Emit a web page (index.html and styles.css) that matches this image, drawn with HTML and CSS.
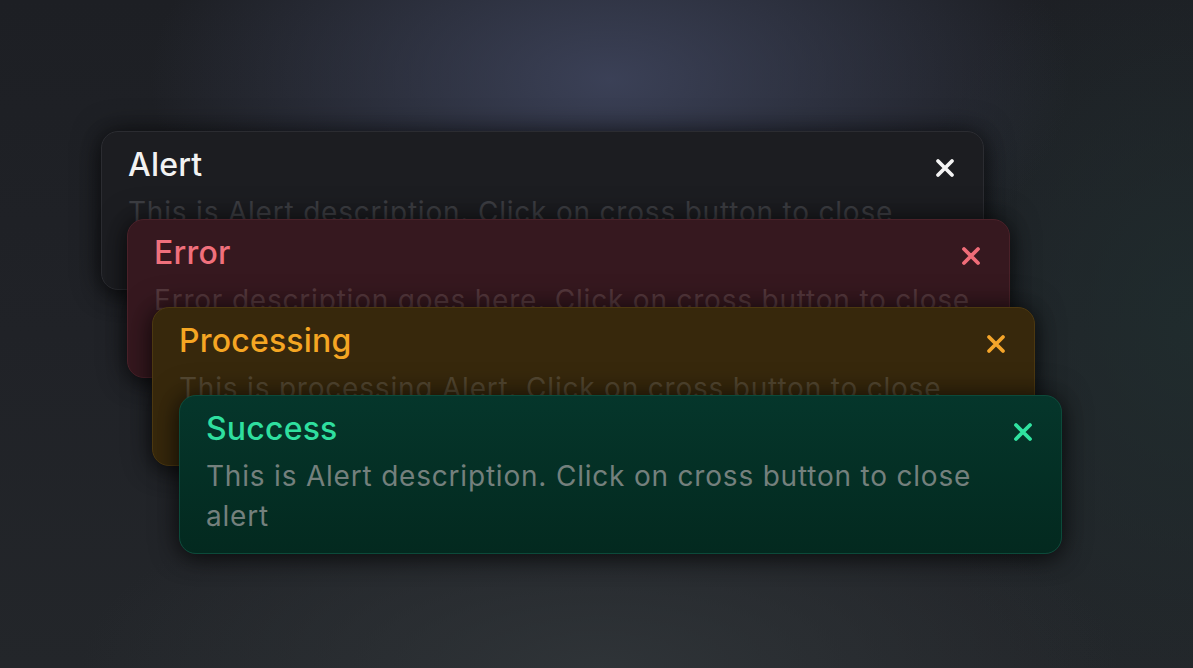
FILE: index.html
```html
<!DOCTYPE html>
<html lang="en">
<head>
<meta charset="utf-8">
<title>Alerts</title>
<link rel="stylesheet" href="styles.css">
</head>
<body>
<main class="stage">
  <div class="stack">
    <section class="alert alert-default">
      <div class="alert-head">
        <h2 class="alert-title">Alert</h2>
        <button class="alert-close" aria-label="Close">
          <svg viewBox="0 0 20 20" width="20" height="20"><path d="M3 3L17 17M17 3L3 17" /></svg>
        </button>
      </div>
      <p class="alert-desc">This is Alert description. Click on cross button to close alert</p>
    </section>
    <section class="alert alert-error">
      <div class="alert-head">
        <h2 class="alert-title">Error</h2>
        <button class="alert-close" aria-label="Close">
          <svg viewBox="0 0 20 20" width="20" height="20"><path d="M3 3L17 17M17 3L3 17" /></svg>
        </button>
      </div>
      <p class="alert-desc">Error description goes here. Click on cross button to close alert</p>
    </section>
    <section class="alert alert-processing">
      <div class="alert-head">
        <h2 class="alert-title">Processing</h2>
        <button class="alert-close" aria-label="Close">
          <svg viewBox="0 0 20 20" width="20" height="20"><path d="M3 3L17 17M17 3L3 17" /></svg>
        </button>
      </div>
      <p class="alert-desc">This is processing Alert. Click on cross button to close alert</p>
    </section>
    <section class="alert alert-success">
      <div class="alert-head">
        <h2 class="alert-title">Success</h2>
        <button class="alert-close" aria-label="Close">
          <svg viewBox="0 0 20 20" width="20" height="20"><path d="M3 3L17 17M17 3L3 17" /></svg>
        </button>
      </div>
      <p class="alert-desc">This is Alert description. Click on cross button to close alert</p>
    </section>
  </div>
</main>
</body>
</html>
```

FILE: styles.css
```css
* { box-sizing: border-box; }

html, body {
  margin: 0;
  padding: 0;
  width: 1193px;
  height: 668px;
  overflow: hidden;
}

body {
  font-family: Inter, "Noto Sans", "Liberation Sans", sans-serif;
  background-color: #202226;
  background-image:
    radial-gradient(ellipse 460px 250px at 610px 80px, rgba(62, 68, 92, 0.9), rgba(62, 68, 92, 0) 100%),
    radial-gradient(ellipse 520px 200px at 600px 668px, rgba(48, 53, 57, 0.9), rgba(48, 53, 57, 0) 100%),
    radial-gradient(ellipse 300px 400px at 1193px 330px, rgba(32, 46, 47, 0.8), rgba(32, 46, 47, 0) 100%),
    linear-gradient(180deg, #1d1f24 0%, #202227 50%, #23262a 100%);
}

.stage {
  padding: 131px 0 0 101px;
}

.stack {
  display: flex;
  flex-direction: column;
}

.alert {
  position: relative;
  width: 883px;
  height: 159px;
  border-radius: 17px;
  padding: 14px 28px 0 26px;
  border: 1px solid rgba(255, 255, 255, 0.07);
  box-shadow: 0 0 28px rgba(0, 0, 0, 0.55), 0 6px 20px rgba(0, 0, 0, 0.35);
}

.alert + .alert {
  margin-top: -71px;
}

.alert-error { margin-left: 26px; }
.alert-processing { margin-left: 51px; }
.alert-success { margin-left: 78px; }

.alert-head {
  display: flex;
  align-items: center;
  justify-content: space-between;
  height: 38px;
}

.alert-title {
  margin: 0;
  font-size: 32px;
  font-weight: 500;
  line-height: 38px;
  letter-spacing: 0.2px;
}

.alert-close {
  background: none;
  border: 0;
  padding: 0;
  width: 20px;
  height: 20px;
  margin-top: 6px;
  display: flex;
}

.alert-close svg {
  fill: none;
  stroke: currentColor;
  stroke-width: 3.8;
  stroke-linecap: round;
}

.alert-desc {
  margin: 8px 0 0;
  font-size: 28px;
  line-height: 40px;
  font-weight: 400;
  letter-spacing: 0.8px;
}

.alert-default {
  background: #1c1d21;
  border-color: #2b2c31;
}
.alert-default .alert-title { color: #f2f2f2; }
.alert-default .alert-close { color: #f4f4f4; }
.alert-default .alert-desc { color: #3d3e43; }

.alert-error {
  background: #36181f;
  border-color: #4a2129;
}
.alert-error .alert-title { color: #f0707c; }
.alert-error .alert-close { color: #ef6c78; }
.alert-error .alert-desc { color: #55383d; }

.alert-processing {
  background: #37280c;
  border-color: #4c3810;
}
.alert-processing .alert-title { color: #f5a623; }
.alert-processing .alert-close { color: #f5a52a; }
.alert-processing .alert-desc { color: #534731; }

.alert-success {
  background: linear-gradient(180deg, #05362b 0%, #03291f 100%);
  border-color: #0c4a3a;
}
.alert-success .alert-title { color: #2fdf9f; }
.alert-success .alert-close { color: #30e3a0; }
.alert-success .alert-desc { color: #74807d; }
```
